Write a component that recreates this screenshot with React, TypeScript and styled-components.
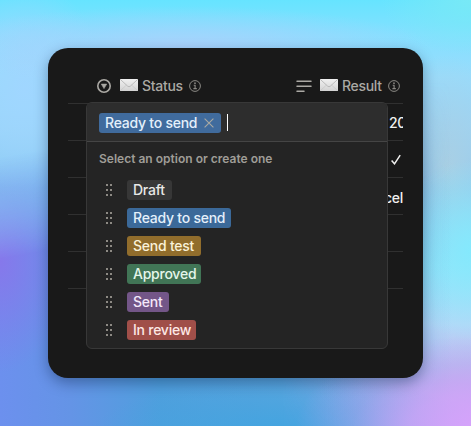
import React from "react";
import styled, { createGlobalStyle } from "styled-components";

const Global = createGlobalStyle`
  * { box-sizing: border-box; }
  body { margin: 0; font-family: Inter, "Liberation Sans", sans-serif; }
`;

const Backdrop = styled.main`
  position: relative;
  width: 471px;
  height: 426px;
  overflow: hidden;
  padding: 48px;
  background:
    radial-gradient(ellipse 90px 55px at 471px 0px, #78e9f6 0%, #78e9f600 100%),
    radial-gradient(ellipse 80px 90px at 471px 250px, #84e9fd 0%, #84e9fd00 100%),
    radial-gradient(ellipse 70px 110px at 445px 165px, #aad0e4 0%, #aad0e400 100%),
    radial-gradient(ellipse 250px 40px at 180px 46px, #a8d2fc 0%, #a8d2fc00 100%),
    radial-gradient(ellipse 80px 110px at 25px 90px, #a0d6ff 0%, #a0d6ff00 100%),
    linear-gradient(180deg, #66e4ff 0%, #84e0ff 8%, #98dcfc 18%, #98d4f8 30%, #88c6f2 44%, #9ce4f8 62%, #b6d8f7 76%, #bcb0ee 90%, #c4a6f0 100%);

  /* Violet and blue wash over the lower left of the wallpaper. */
  &::before {
    content: "";
    position: absolute;
    inset: 0;
    background:
      radial-gradient(ellipse 200px 60px at 290px 436px, #40a4e0 0%, #40a4e000 100%),
      radial-gradient(ellipse 70px 110px at 0px 262px, #8678eb 0%, #8678eb00 100%),
      linear-gradient(90deg, #6c90ee 0%, #6494e6 15%, #4f9fdd 34%, #5aa5de 60%, #7aa8e200 96%);
    mask-image: linear-gradient(170deg, transparent 155px, #000 255px);
  }

  &::after {
    content: "";
    position: absolute;
    inset: 0;
    background: radial-gradient(ellipse 190px 95px at 485px 430px, #d8a2fc 0%, #cfa4f8c8 40%, #bca4f060 70%, #b4a4ee00 100%);
  }
`;

const Card = styled.section`
  position: relative;
  z-index: 1;
  width: 375px;
  height: 330px;
  padding: 20px;
  border-radius: 20px;
  background: #191919;
  box-shadow: 0 5px 14px rgba(0, 20, 55, 0.36);
`;

const Table = styled.div`
  width: 335px;
  overflow: hidden;
`;

const Header = styled.div`
  display: grid;
  grid-template-columns: 200px 135px;
  height: 36px;
  border-bottom: 1px solid #303030;
  color: #aba9a4;
`;

const HeaderCell = styled.div<{ $start: number; $gap: number }>`
  display: flex;
  align-items: center;
  padding-left: ${(p) => p.$start}px;
  svg { flex: none; }
  > svg:first-child { margin-right: ${(p) => p.$gap}px; }
`;

const HeaderLabel = styled.span<{ $width: number }>`
  width: ${(p) => p.$width}px;
  margin-left: 4px;
  font-size: 14px;
  font-weight: 500;
  letter-spacing: -0.3px;
  line-height: 20px;
  white-space: nowrap;
`;

const Row = styled.div`
  display: flex;
  align-items: center;
  justify-content: flex-end;
  height: 37px;
  border-bottom: 1px solid #303030;
  color: #f0f0ef;
  font-size: 14px;
  font-weight: 500;
  letter-spacing: -0.3px;
  svg { margin-right: 1px; }
`;

const Clipped = styled.span<{ $width: number; $drop: number }>`
  width: ${(p) => p.$width}px;
  overflow: hidden;
  white-space: nowrap;
  padding-top: ${(p) => p.$drop}px;
`;

const Popover = styled.div`
  position: absolute;
  left: 38px;
  top: 54px;
  width: 302px;
  height: 247px;
  overflow: hidden;
  border: 1px solid #383838;
  border-radius: 6px;
  background: #242424;
`;

const Field = styled.div`
  display: flex;
  align-items: center;
  height: 39px;
  padding: 2px 12px 0;
  border-bottom: 1px solid #454545;
  background: #2d2d2d;
`;

const Caret = styled.span`
  width: 1px;
  height: 17px;
  margin: -2px 0 0 6px;
  background: #fff;
`;

const Tag = styled.span<{ $bg: string; $fg: string; $width: number }>`
  display: inline-flex;
  align-items: center;
  width: ${(p) => p.$width}px;
  height: 20px;
  padding: 0 7px 0 6px;
  border-radius: 3px;
  background: ${(p) => p.$bg};
  color: ${(p) => p.$fg};
  font-size: 14px;
  font-weight: 500;
  letter-spacing: -0.24px;
  line-height: 20px;
  white-space: nowrap;
  svg { flex: none; margin-left: auto; }
`;

const Hint = styled.div`
  height: 34px;
  padding: 9px 12px 0;
  color: #9f9d97;
  font-size: 12px;
  font-weight: 600;
  letter-spacing: 0.01px;
  line-height: 16px;
`;

const Option = styled.div`
  display: flex;
  align-items: center;
  gap: 14px;
  height: 28px;
  padding-left: 18px;
`;

const SelectIcon = () => (
  <svg width="14" height="14" viewBox="0 0 14 14">
    <circle cx="7" cy="7" r="6.2" fill="none" stroke="#aba9a4" strokeWidth="1.6" />
    <path d="M4.3 5.1h5.4L7 9.6Z" fill="#aba9a4" stroke="#aba9a4" strokeWidth=".6" strokeLinejoin="round" />
  </svg>
);

const LinesIcon = () => (
  <svg width="16" height="14" viewBox="0 0 16 14" stroke="#aba9a4" strokeWidth="1.5" strokeLinecap="round">
    <path d="M1 2.2h14M1 7.2h14M1 12.2h7" />
  </svg>
);

const EnvelopeIcon = ({ id }: { id: string }) => (
  <svg width="18" height="13" viewBox="0 0 18 13">
    <defs>
      <linearGradient id={id} x2="0" y2="1">
        <stop stopColor="#f0f0f0" />
        <stop offset="1" stopColor="#d2d2d2" />
      </linearGradient>
    </defs>
    <rect width="18" height="12" rx=".6" fill={`url(#${id})`} />
    <path d="M.5 11.5 6.5 6M17.5 11.5l-6-5.5" stroke="#c2c2c2" strokeWidth=".6" />
    <path d="M.5.6 7.7 7.2q1.3 1.1 2.6 0L17.5.6" fill="none" stroke="#b0b0b0" strokeWidth=".8" />
  </svg>
);

const InfoIcon = () => (
  <svg width="12" height="12" viewBox="0 0 12 12" fill="none" stroke="#8b8984">
    <circle cx="6" cy="6" r="5.4" strokeWidth="1" />
    <path d="M4.7 5.2H6.1v3.4M4.4 8.6h3.4" strokeWidth="1.1" />
    <circle cx="6" cy="3.2" r=".85" fill="#8b8984" stroke="none" />
  </svg>
);

const CloseIcon = () => (
  <svg width="10" height="10" viewBox="0 0 10 10" stroke="#aaa9a2" strokeWidth="1.1">
    <path d="M.6.6l8.8 8.8M9.4.6.6 9.4" />
  </svg>
);

const DragIcon = () => (
  <svg width="8" height="12" viewBox="0 0 8 12" fill="#b0ada5">
    {[1, 6, 11].map((y) => [2, 6].map((x) => <circle key={`${x}-${y}`} cx={x} cy={y} r="1" />))}
  </svg>
);

const CheckIcon = () => (
  <svg width="12" height="12" viewBox="0 0 12 12" fill="none" stroke="#f0f0ef" strokeWidth="1.5">
    <path d="M1.6 7.5 4.5 10.8 10.2 2.1" />
  </svg>
);

const options = [
  { label: "Draft", bg: "#373737", fg: "#e8e8e6", width: 45 },
  { label: "Ready to send", bg: "#3b6999", fg: "#e4f0fb", width: 104 },
  { label: "Send test", bg: "#916d2c", fg: "#faf2d9", width: 74 },
  { label: "Approved", bg: "#417556", fg: "#e4f5ea", width: 74 },
  { label: "Sent", bg: "#735688", fg: "#f3e8fa", width: 42 },
  { label: "In review", bg: "#a04f49", fg: "#fde8e5", width: 69 },
];

export default function App() {
  return (
    <>
      <Global />
      <Backdrop>
        <Card>
          <Table>
            <Header>
              <HeaderCell $start={29} $gap={9}>
                <SelectIcon />
                <EnvelopeIcon id="statusPaper" />
                <HeaderLabel $width={47}>Status</HeaderLabel>
                <InfoIcon />
              </HeaderCell>
              <HeaderCell $start={28} $gap={8}>
                <LinesIcon />
                <EnvelopeIcon id="resultPaper" />
                <HeaderLabel $width={46}>Result</HeaderLabel>
                <InfoIcon />
              </HeaderCell>
            </Header>
            <Row><Clipped $width={14} $drop={1}>20</Clipped></Row>
            <Row><CheckIcon /></Row>
            <Row><Clipped $width={19} $drop={3}>celed</Clipped></Row>
            <Row />
            <Row />
          </Table>
          <Popover>
            <Field>
              <Tag $bg="#406b9d" $fg="#e4f0fb" $width={122}>Ready to send<CloseIcon /></Tag>
              <Caret />
            </Field>
            <Hint>Select an option or create one</Hint>
            {options.map((o) => (
              <Option key={o.label}>
                <DragIcon />
                <Tag $bg={o.bg} $fg={o.fg} $width={o.width}>{o.label}</Tag>
              </Option>
            ))}
          </Popover>
        </Card>
      </Backdrop>
    </>
  );
}
